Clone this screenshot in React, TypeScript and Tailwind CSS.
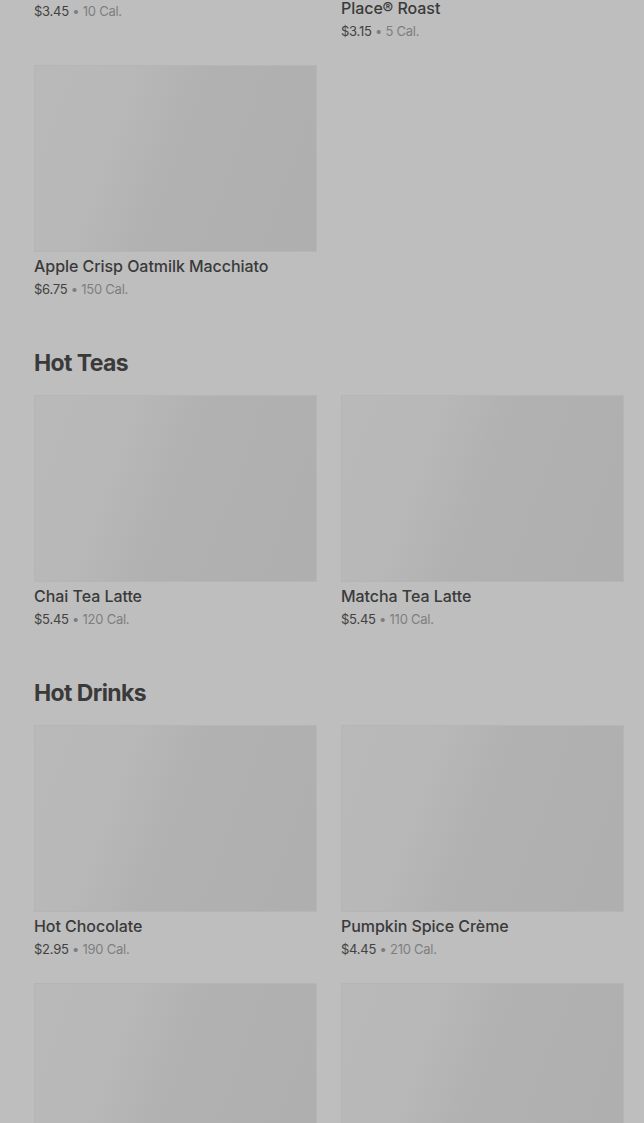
import React from 'react';

type Item = { name: string; price: string; cal: string };

const sections: { title?: string; items: Item[] }[] = [
  {
    items: [
      { name: 'Caffè Americano', price: '$3.45', cal: '10 Cal.' },
      { name: 'Featured Starbucks® Pike\nPlace® Roast', price: '$3.15', cal: '5 Cal.' },
      { name: 'Apple Crisp Oatmilk Macchiato', price: '$6.75', cal: '150 Cal.' },
    ],
  },
  {
    title: 'Hot Teas',
    items: [
      { name: 'Chai Tea Latte', price: '$5.45', cal: '120 Cal.' },
      { name: 'Matcha Tea Latte', price: '$5.45', cal: '110 Cal.' },
    ],
  },
  {
    title: 'Hot Drinks',
    items: [
      { name: 'Hot Chocolate', price: '$2.95', cal: '190 Cal.' },
      { name: 'Pumpkin Spice Crème', price: '$4.45', cal: '210 Cal.' },
      { name: 'White Hot Chocolate', price: '$3.45', cal: '240 Cal.' },
      { name: 'Steamed Milk', price: '$2.95', cal: '200 Cal.' },
    ],
  },
];

const ProductCard: React.FC<{ item: Item }> = ({ item }) => (
  <div className="flex flex-col">
    <div className="h-[187px] w-full border border-[#b5b5b5] bg-[linear-gradient(110deg,#b9b9b9_0%,#b8b8b8_28%,#b1b1b1_50%,#afafaf_100%)]" />
    <div className="mt-1 whitespace-pre-line text-[16px] font-medium leading-5 tracking-[-0.05px] text-[#3a3a3a]">
      {item.name}
    </div>
    <div className="mt-[3px] text-[13px] leading-5 tracking-[-0.25px] text-[#7e7e7e]">
      <span className="text-[#424242]">{item.price}</span> • {item.cal}
    </div>
  </div>
);

export default function App() {
  return (
    <div className="min-h-[1123px] overflow-hidden bg-[#bebebe] font-['Inter',sans-serif]">
      <div className="-mt-[213px] pl-[34px] pr-[20px]">
        {sections.map((section, i) => (
          <section key={i} className={section.title ? 'mt-12' : ''}>
            {section.title && (
              <h2 className="mb-4 text-[23px] font-bold leading-8 tracking-[-0.6px] text-[#3a3a3a]">
                {section.title}
              </h2>
            )}
            <div className="grid grid-cols-2 gap-x-6 gap-y-6">
              {section.items.map((item) => (
                <ProductCard key={item.name} item={item} />
              ))}
            </div>
          </section>
        ))}
      </div>
    </div>
  );
}
